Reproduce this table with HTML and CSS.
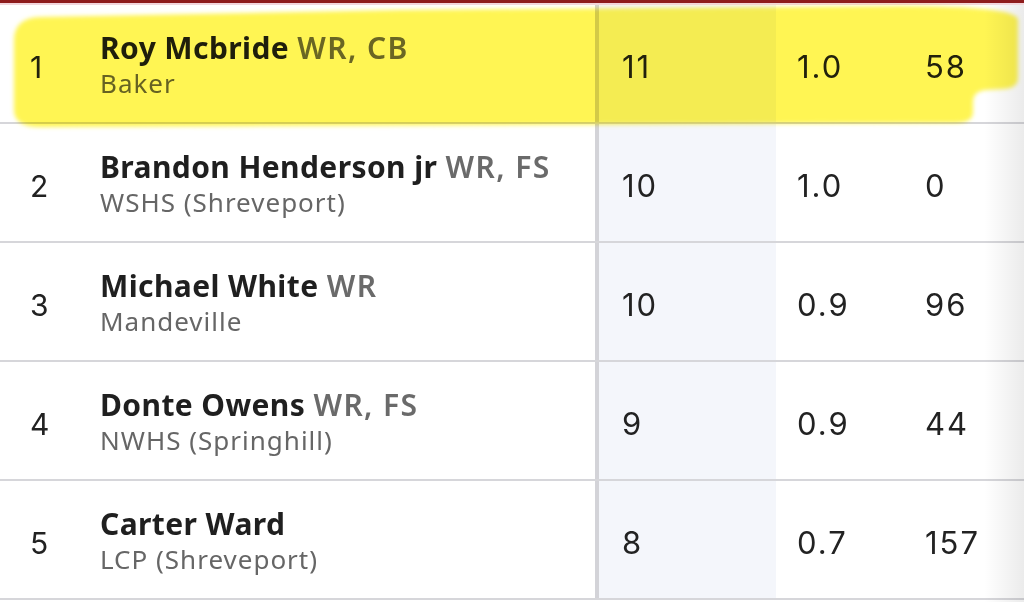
FILE: index.html
```html
<!DOCTYPE html>
<html>
<head>
<meta charset="utf-8">
<link rel="stylesheet" href="styles.css">
</head>
<body>
<div class="page">
  <div class="topbar"></div>
  <div class="table">
    <div class="row">
      <div class="rank">1</div>
      <div class="player">
        <div class="name">Roy Mcbride <span class="pos">WR, CB</span></div>
        <div class="school">Baker</div>
      </div>
      <div class="stat s1">11</div>
      <div class="stat s2">1.0</div>
      <div class="stat s3">58</div>
    </div>
    <div class="row">
      <div class="rank">2</div>
      <div class="player">
        <div class="name">Brandon Henderson jr <span class="pos">WR, FS</span></div>
        <div class="school">WSHS (Shreveport)</div>
      </div>
      <div class="stat s1">10</div>
      <div class="stat s2">1.0</div>
      <div class="stat s3">0</div>
    </div>
    <div class="row">
      <div class="rank">3</div>
      <div class="player">
        <div class="name">Michael White <span class="pos">WR</span></div>
        <div class="school">Mandeville</div>
      </div>
      <div class="stat s1">10</div>
      <div class="stat s2">0.9</div>
      <div class="stat s3">96</div>
    </div>
    <div class="row">
      <div class="rank">4</div>
      <div class="player">
        <div class="name">Donte Owens <span class="pos">WR, FS</span></div>
        <div class="school">NWHS (Springhill)</div>
      </div>
      <div class="stat s1">9</div>
      <div class="stat s2">0.9</div>
      <div class="stat s3">44</div>
    </div>
    <div class="row">
      <div class="rank">5</div>
      <div class="player">
        <div class="name">Carter Ward</div>
        <div class="school">LCP (Shreveport)</div>
      </div>
      <div class="stat s1">8</div>
      <div class="stat s2">0.7</div>
      <div class="stat s3">157</div>
    </div>
  </div>
  <svg class="highlight" width="1024" height="140" viewBox="0 0 1024 140" aria-hidden="true">
    <defs>
      <filter id="soft" x="-5%" y="-20%" width="110%" height="140%">
        <feGaussianBlur stdDeviation="2.2"/>
      </filter>
    </defs>
    <path filter="url(#soft)" fill="#fff552" d="M 14 40 Q 14 18 40 17 L 400 10 L 900 6 Q 1018 6 1018 20 L 1018 78 Q 1018 88 1004 89 L 986 90 Q 973 91 973 102 L 973 112 Q 973 123 955 123 L 40 127 Q 14 127 14 110 Z"/>
  </svg>
  <div class="edge-shadow"></div>
</div>
</body>
</html>
```

FILE: styles.css
```css
html, body {
  margin: 0;
  padding: 0;
  background: #ffffff;
}

.page {
  position: relative;
  width: 1024px;
  height: 602px;
  overflow: hidden;
  font-family: "Noto Sans", "Open Sans", sans-serif;
  color: #1e1e1e;
}

.topbar {
  height: 3px;
  background: #8e1c1c;
  border-bottom: 2px solid #f2d6dc;
}

.table {
  display: flex;
  flex-direction: column;
}

.row {
  display: grid;
  grid-template-columns: 100px 499px 177px 128px 1fr;
  height: 117px;
  border-bottom: 2px solid #d6d6da;
}

.rank {
  display: flex;
  align-items: center;
  padding-left: 30px;
  font-family: "Inter", "Noto Sans", sans-serif;
  font-size: 30px;
  letter-spacing: 1px;
  color: #222;
  padding-top: 6px;
}

.player {
  display: flex;
  flex-direction: column;
  justify-content: center;
  border-right: 4px solid #d3d3d8;
  padding-top: 2px;
}

.name {
  font-size: 30px;
  font-weight: 700;
  letter-spacing: 0.4px;
  line-height: 36px;
  color: #1f1f1f;
  white-space: nowrap;
}

.pos {
  color: #6a6a6a;
  font-weight: 600;
  letter-spacing: 1.4px;
}

.school {
  font-size: 26px;
  letter-spacing: 1px;
  line-height: 34px;
  color: #666;
}

.stat {
  display: flex;
  align-items: center;
  font-family: "Inter", "Noto Sans", sans-serif;
  font-size: 31px;
  letter-spacing: 2px;
  color: #222;
  padding-top: 6px;
}

.s1 {
  background: #f4f6fb;
  padding-left: 23px;
}

.s2 {
  padding-left: 21px;
}

.s3 {
  padding-left: 21px;
}

.highlight {
  position: absolute;
  left: 0;
  top: 0;
  mix-blend-mode: multiply;
  pointer-events: none;
}

.edge-shadow {
  position: absolute;
  right: 0;
  top: 5px;
  width: 40px;
  height: 597px;
  background: linear-gradient(to right, rgba(0,0,0,0), rgba(0,0,0,0.08));
}
```
